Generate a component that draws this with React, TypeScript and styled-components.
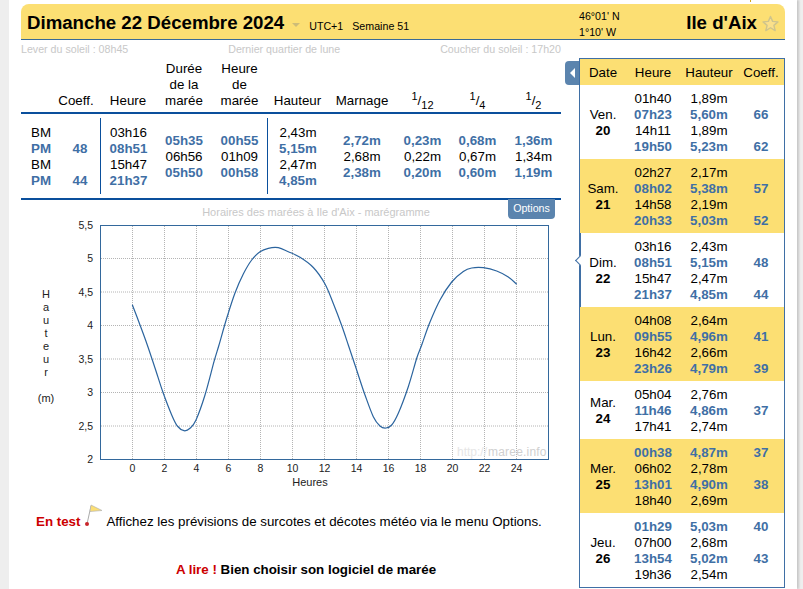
import React from "react";
import styled, { createGlobalStyle } from "styled-components";

const Global = createGlobalStyle`
  html, body { margin: 0; padding: 0; height: 589px; overflow: hidden; background: #eeeeee; }
  body { font-family: "Liberation Sans", Arial, sans-serif; font-size: 13.33px; color: #000; }
`;

const YELLOW = "#fcdf73";
const BLUE = "#3f6fa5";
const LINE = "#0a4f9c";

const Sheet = styled.div`
  margin-left: 9px; width: 776px; height: 585px; padding: 4px 0 0 12px;
  background: #fff; box-shadow: 2px 0 2px #c8c8c8; overflow: hidden;
`;
const Header = styled.header`
  position: relative; width: 764px; height: 36px; box-sizing: border-box;
  display: grid; grid-template-columns: 558px 92px 1fr; align-items: center;
  background: ${YELLOW}; border-bottom: 1px solid #3a6a96; border-radius: 8px 8px 0 0;
`;
const TopMark = styled.span`
  position: absolute; left: 729px; top: -4px; width: 1px; height: 2px; background: #d0a520;
`;
const TitleGroup = styled.div`display: flex; align-items: center; padding-left: 6px;`;
const Title = styled.h1`margin: 0; font-size: 18.67px; font-weight: 700; line-height: 38px;`;
const Caret = styled.span`
  width: 0; height: 0; margin: 3px 0 0 8px;
  border-left: 4px solid transparent; border-right: 4px solid transparent; border-top: 4px solid #cdbc78;
`;
const Meta = styled.span`font-size: 10.67px; margin-left: ${(p: { $gap: number }) => p.$gap}px; padding-top: 5px;`;
const Coords = styled.div`font-size: 10.67px; line-height: 16px; padding-top: 2px;`;
const Place = styled.div`display: flex; align-items: center; justify-content: flex-end; gap: 5px; padding-right: 6px;`;
const PlaceName = styled.span`font-size: 18.67px; font-weight: 700; line-height: 38px;`;

const Columns = styled.div`display: flex; width: 764px; gap: 18px;`;
const LeftCol = styled.div`width: 540px; flex: none;`;
const SunRow = styled.div`
  display: flex; justify-content: space-between; height: 20px; line-height: 18px;
  font-size: 10.67px; color: #c8c8c8;
`;

const TIDE_COLS = "31px 48px 56px 56px 55px 61px 68px 53px 57px 55px";
const TableHead = styled.div`
  display: grid; grid-template-columns: ${TIDE_COLS}; align-items: end; height: 54px; box-sizing: border-box;
  line-height: 16px; text-align: center; padding-bottom: 3px; border-bottom: 2px solid ${LINE};
  sup, sub { font-size: 11px; line-height: 0; }
`;
const TableBody = styled.div`
  display: grid; grid-template-columns: ${TIDE_COLS}; height: 86px; box-sizing: border-box;
  padding: 4px 0 4px; border-bottom: 2px solid ${LINE};
`;
const Col = styled.div<{ $divider?: boolean; $left?: boolean; $shift?: number }>`
  display: flex; flex-direction: column; justify-content: center;
  text-align: ${(p) => (p.$left ? "left" : "center")};
  padding-left: ${(p) => p.$shift ?? 0}px;
  border-left: ${(p) => (p.$divider ? `1px solid ${LINE}` : "0")};
`;
const Val = styled.div<{ $high?: boolean }>`
  height: 16px; line-height: 18px; color: ${(p) => (p.$high ? BLUE : "#000")}; font-weight: ${(p) => (p.$high ? 700 : 400)};
`;

const ChartArea = styled.section`position: relative; height: 290px;`;
const ChartTitle = styled.div`
  position: absolute; top: 6px; left: 50px; right: 0; text-align: center; font-size: 11px; color: #c8c8c8;
`;
const OptionsButton = styled.button`
  position: absolute; top: -1px; left: 487px; width: 47px; height: 20px; padding: 0 0 3px; border: 0;
  background: #5b84ae; color: #fff; font: 10.67px "Liberation Sans", Arial, sans-serif; border-radius: 0 0 4px 4px;
`;
const ChartSvg = styled.svg`display: block; font-family: "Liberation Sans", Arial, sans-serif;`;

const TestRow = styled.div`display: flex; align-items: center; height: 28px; margin-top: 17px; padding-left: 15px;`;
const RedStrong = styled.strong`color: #cc0000;`;
const TestText = styled.span`margin-left: 4px;`;
const ReadRow = styled.div`text-align: center; margin-top: 27px; padding-left: 30px; font-weight: 700; line-height: 16px;`;

const Panel = styled.aside`
  position: relative; margin-top: 18px; width: 206px; height: 530px; box-sizing: border-box;
  border: 1px solid ${BLUE}; border-right-width: 1px;
`;
const Toggle = styled.button`
  position: absolute; left: -15px; top: 2px; width: 14px; height: 24px; padding: 0; border: 0;
  background: #5b84ae; border-radius: 4px 0 0 4px; display: flex; align-items: center; justify-content: center;
`;
const ArrowLeft = styled.span`
  width: 0; height: 0; border-top: 5px solid transparent; border-bottom: 5px solid transparent; border-right: 5px solid #fff;
`;
const PANEL_COLS = "46px 54px 58px 46px";
const PanelHead = styled.div`
  display: grid; grid-template-columns: ${PANEL_COLS}; align-items: center; height: 26px;
  background: ${YELLOW}; text-align: center;
`;
const Day = styled.div<{ $even: boolean; $selected: boolean; $rows: number }>`
  position: relative; display: grid; grid-template-columns: ${PANEL_COLS};
  grid-template-rows: repeat(${(p) => p.$rows}, 16px);
  padding: 5px 0; text-align: center;
  background: ${(p) => (p.$even ? YELLOW : "#fff")};
  box-shadow: ${(p) => (p.$selected ? `inset 1px 0 0 ${BLUE}` : "none")};
`;
const DayLabel = styled.div`grid-column: 1; grid-row: 1 / -1; align-self: center; line-height: 16px; padding-top: 2px;`;
const DayNum = styled.div`font-weight: 700;`;
const Notch = styled.span`
  position: absolute; left: -6px; top: 24px; width: 7px; height: 7px; box-sizing: border-box;
  background: #fff; border-left: 1px solid ${BLUE}; border-bottom: 1px solid ${BLUE};
  transform: translateX(2.5px) rotate(45deg);
`;
const CellHeure = styled(Val)`grid-column: 2;`;
const CellHauteur = styled(Val)`grid-column: 3;`;
const CellCoeff = styled(Val)`grid-column: 4;`;

type Tide = [string, string, string?];
const days: { d: string; n: string; t: Tide[]; sel?: boolean }[] = [
  { d: "Ven.", n: "20", t: [["01h40", "1,89m"], ["07h23", "5,60m", "66"], ["14h11", "1,89m"], ["19h50", "5,23m", "62"]] },
  { d: "Sam.", n: "21", t: [["02h27", "2,17m"], ["08h02", "5,38m", "57"], ["14h58", "2,19m"], ["20h33", "5,03m", "52"]] },
  { d: "Dim.", n: "22", sel: true, t: [["03h16", "2,43m"], ["08h51", "5,15m", "48"], ["15h47", "2,47m"], ["21h37", "4,85m", "44"]] },
  { d: "Lun.", n: "23", t: [["04h08", "2,64m"], ["09h55", "4,96m", "41"], ["16h42", "2,66m"], ["23h26", "4,79m", "39"]] },
  { d: "Mar.", n: "24", t: [["05h04", "2,76m"], ["11h46", "4,86m", "37"], ["17h41", "2,74m"]] },
  { d: "Mer.", n: "25", t: [["00h38", "4,87m", "37"], ["06h02", "2,78m"], ["13h01", "4,90m", "38"], ["18h40", "2,69m"]] },
  { d: "Jeu.", n: "26", t: [["01h29", "5,03m", "40"], ["07h00", "2,68m"], ["13h54", "5,02m", "43"], ["19h36", "2,54m"]] },
];

const curvePts: [number, number][] = [
  [132.3,304.7],[140,325],[147.3,345],[155,368],[163.3,393.3],[171.7,415],[177.3,426],[184,430.7],[190,428.3],[196,420],
  [205,395],[214,361.7],[219,345],[226.7,318.3],[235,293],[243.3,274],[251.7,260],[260,251.7],[268.3,248.3],[278.3,247.7],
  [288.3,251.7],[300,257.3],[313.3,267.5],[325,284],[333.3,303.5],[341.7,325.5],[348.3,345],[355,365],[365,395],[373.3,416.7],
  [380,426],[386,428],[391.7,425],[398.3,413.3],[408.3,386.7],[416.7,358.3],[421.7,345],[430,322],[440,300],[451.7,282],
  [463.3,271.5],[471.7,268],[483.3,267.7],[496.7,271],[508.3,277],[516.7,284.3],
];
function smooth(p: [number, number][]) {
  let d = `M${p[0][0]} ${p[0][1]}`;
  for (let i = 0; i < p.length - 1; i++) {
    const a = p[Math.max(i - 1, 0)], b = p[i], c = p[i + 1], e = p[Math.min(i + 2, p.length - 1)];
    d += `C${(b[0] + (c[0] - a[0]) / 6).toFixed(1)} ${(b[1] + (c[1] - a[1]) / 6).toFixed(1)} ${(c[0] - (e[0] - b[0]) / 6).toFixed(1)} ${(c[1] - (e[1] - b[1]) / 6).toFixed(1)} ${c[0]} ${c[1]}`;
  }
  return d;
}

const yTicks = ["5,5", "5", "4,5", "4", "3,5", "3", "2,5", "2"];
const xTicks = [0, 2, 4, 6, 8, 10, 12, 14, 16, 18, 20, 22, 24];
const axisLetters = ["H", "a", "u", "t", "e", "u", "r"];

function Chart() {
  return (
    <ChartSvg width={540} height={290} viewBox="21 200 540 290">
      <g stroke="#b4b4b4" strokeWidth={1} strokeDasharray="1 1">
        {xTicks.map((t) => <line key={t} x1={132.5 + t * 16} x2={132.5 + t * 16} y1={226} y2={459} />)}
        {yTicks.slice(1, 7).map((_, i) => <line key={i} x1={101} x2={548} y1={258.5 + i * 33.5} y2={258.5 + i * 33.5} />)}
      </g>
      <rect x={100.5} y={225.5} width={448} height={234} fill="none" stroke="#33689c" strokeWidth={1} />
      <path d={smooth(curvePts)} fill="none" stroke="#2b649e" strokeWidth={1.2} />
      <g fontSize={10.5} fill="#222" textAnchor="end">
        {yTicks.map((t, i) => <text key={t} x={93} y={228.5 + i * 33.5}>{t}</text>)}
      </g>
      <g fontSize={10.5} fill="#222" textAnchor="middle">
        {xTicks.map((t) => <text key={t} x={132.5 + t * 16} y={472}>{t}</text>)}
      </g>
      <text x={310} y={486} fontSize={11} fill="#222" textAnchor="middle">Heures</text>
      <g fontSize={11} fill="#222" textAnchor="middle">
        {axisLetters.map((l, i) => <text key={i} x={46} y={298 + i * 13}>{l}</text>)}
        <text x={46} y={402}>(m)</text>
      </g>
      <text x={457} y={456} fontSize={12} fill="#e6e6e6">http://</text>
      <text x={488} y={456} fontSize={12} fill="#d0d0d0" letterSpacing={0.2}>maree.info</text>
    </ChartSvg>
  );
}

const FlagSvg = styled.svg`flex: none; margin: -12px 0 0 5px; overflow: visible;`;

export default function App() {
  return (
    <>
      <Global />
      <Sheet>
        <Header>
          <TopMark />
          <TitleGroup>
            <Title>Dimanche 22 Décembre 2024</Title>
            <Caret />
            <Meta $gap={9}>UTC+1</Meta>
            <Meta $gap={9}>Semaine 51</Meta>
          </TitleGroup>
          <Coords>46°01' N<br />1°10' W</Coords>
          <Place>
            <PlaceName>Ile d'Aix</PlaceName>
            <svg width="17" height="17" viewBox="0 0 24 24" fill="#fbe08a" stroke="#cfc48c" strokeWidth="2" strokeLinejoin="round">
              <path d="M12 2l3 7 7.500 .7-5.700 4.900 1.800 7.400L12 18l-6.600 4 1.800-7.400L1.500 9.700 9 9z" />
            </svg>
          </Place>
        </Header>
        <Columns>
          <LeftCol>
            <SunRow>
              <span>Lever du soleil : 08h45</span>
              <span>Dernier quartier de lune</span>
              <span>Coucher du soleil : 17h20</span>
            </SunRow>
            <TableHead>
              <span />
              <span>Coeff.</span>
              <span>Heure</span>
              <span>Durée<br />de la<br />marée</span>
              <span>Heure<br />de<br />marée</span>
              <span>Hauteur</span>
              <span>Marnage</span>
              <span><sup>1</sup>/<sub>12</sub></span>
              <span><sup>1</sup>/<sub>4</sub></span>
              <span><sup>1</sup>/<sub>2</sub></span>
            </TableHead>
            <TableBody>
              <Col $left $shift={10}>
                <Val>BM</Val><Val $high>PM</Val><Val>BM</Val><Val $high>PM</Val>
              </Col>
              <Col $shift={8}>
                <Val /><Val $high>48</Val><Val /><Val $high>44</Val>
              </Col>
              <Col $divider>
                <Val>03h16</Val><Val $high>08h51</Val><Val>15h47</Val><Val $high>21h37</Val>
              </Col>
              <Col><Val $high>05h35</Val><Val>06h56</Val><Val $high>05h50</Val></Col>
              <Col><Val $high>00h55</Val><Val>01h09</Val><Val $high>00h58</Val></Col>
              <Col $divider>
                <Val>2,43m</Val><Val $high>5,15m</Val><Val>2,47m</Val><Val $high>4,85m</Val>
              </Col>
              <Col><Val $high>2,72m</Val><Val>2,68m</Val><Val $high>2,38m</Val></Col>
              <Col><Val $high>0,23m</Val><Val>0,22m</Val><Val $high>0,20m</Val></Col>
              <Col><Val $high>0,68m</Val><Val>0,67m</Val><Val $high>0,60m</Val></Col>
              <Col><Val $high>1,36m</Val><Val>1,34m</Val><Val $high>1,19m</Val></Col>
            </TableBody>
            <ChartArea>
              <ChartTitle>Horaires des marées à Ile d'Aix - marégramme</ChartTitle>
              <OptionsButton>Options</OptionsButton>
              <Chart />
            </ChartArea>
            <TestRow>
              <RedStrong>En test</RedStrong>
              <FlagSvg width="17" height="24" viewBox="0 0 17 24">
                <path d="M6 3L2 21" stroke="#aaa" strokeWidth="1" fill="none" />
                <path d="M6 2L17 7.500 5 8.500z" fill="#fcdf73" stroke="#b5b5b5" strokeWidth=".7" />
                <circle cx="2" cy="21" r="2" fill="#c9252b" />
              </FlagSvg>
              <TestText>Affichez les prévisions de surcotes et décotes météo via le menu Options.</TestText>
            </TestRow>
            <ReadRow><RedStrong>A lire !</RedStrong> Bien choisir son logiciel de marée</ReadRow>
          </LeftCol>
          <Panel>
            <Toggle aria-label="Replier"><ArrowLeft /></Toggle>
            <PanelHead>
              <span>Date</span><span>Heure</span><span>Hauteur</span><span>Coeff.</span>
            </PanelHead>
            {days.map((day, i) => (
              <Day key={day.n} $even={i % 2 === 1} $selected={!!day.sel} $rows={day.t.length}>
                {day.sel && <Notch />}
                <DayLabel>{day.d}<DayNum>{day.n}</DayNum></DayLabel>
                {day.t.map((r) => (
                  <React.Fragment key={r[0]}>
                    <CellHeure $high={!!r[2]}>{r[0]}</CellHeure>
                    <CellHauteur $high={!!r[2]}>{r[1]}</CellHauteur>
                    <CellCoeff $high={!!r[2]}>{r[2] ?? ""}</CellCoeff>
                  </React.Fragment>
                ))}
              </Day>
            ))}
          </Panel>
        </Columns>
      </Sheet>
    </>
  );
}
